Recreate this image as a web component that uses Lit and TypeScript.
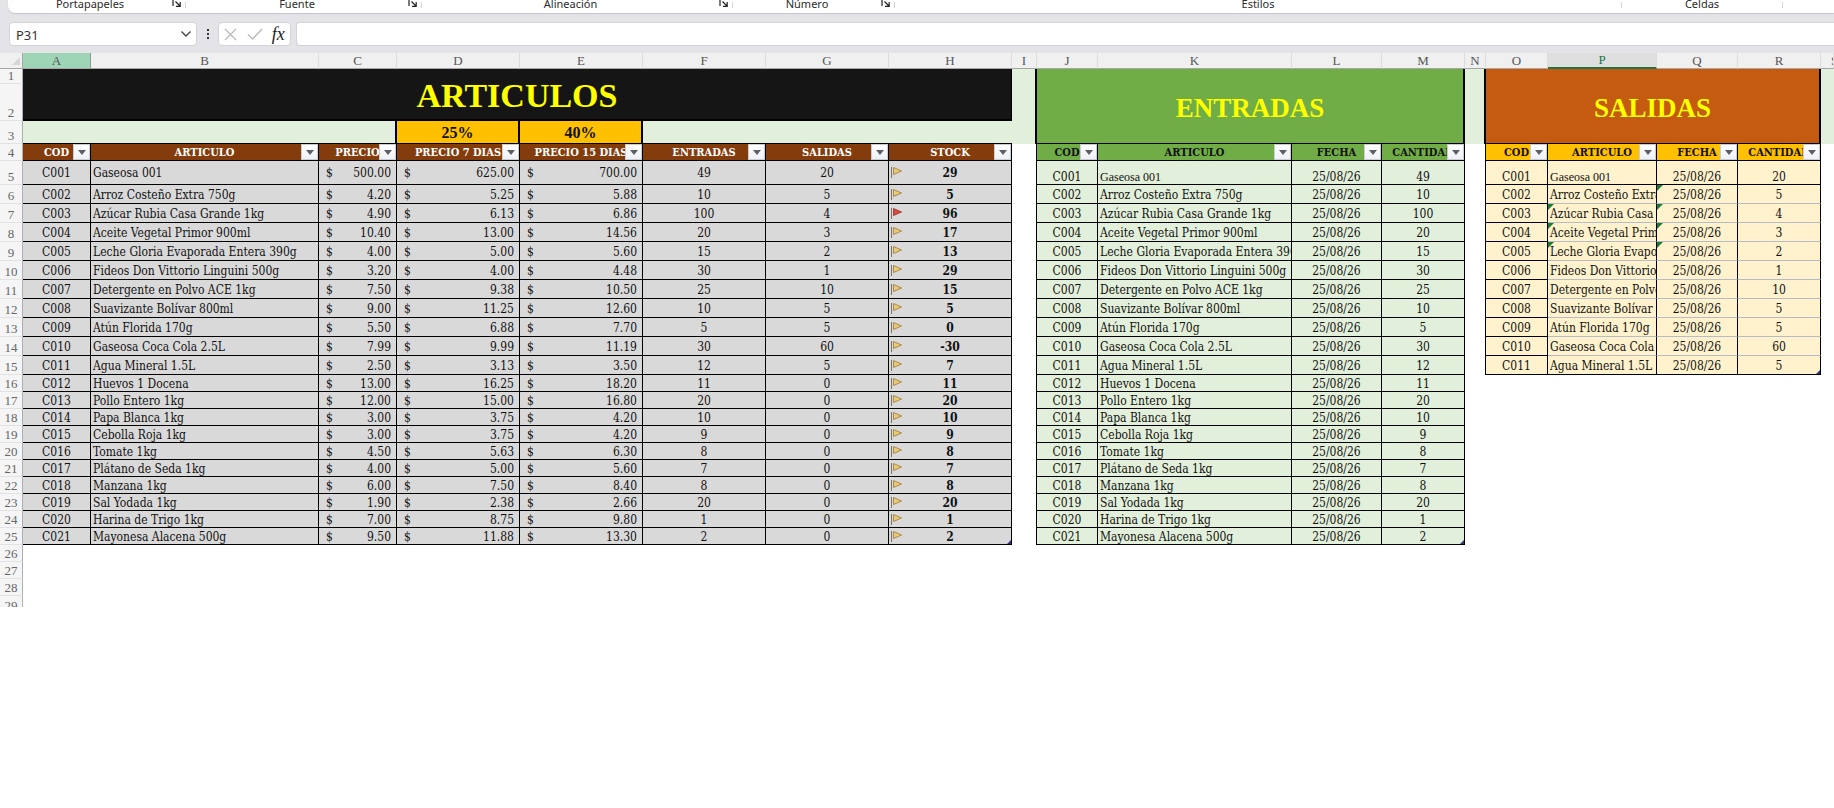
import { LitElement, html, css, svg, nothing, TemplateResult } from "lit";
import { customElement, property } from "lit/decorators.js";
import { classMap } from "lit/directives/class-map.js";

type Product = [code: string, name: string, price: string, price7: string, price15: string, entries: number, exits: number, stock: number];

const PRODUCTS: Product[] = [
  ["C001", "Gaseosa 001", "500.00", "625.00", "700.00", 49, 20, 29],
  ["C002", "Arroz Costeño Extra 750g", "4.20", "5.25", "5.88", 10, 5, 5],
  ["C003", "Azúcar Rubia Casa Grande 1kg", "4.90", "6.13", "6.86", 100, 4, 96],
  ["C004", "Aceite Vegetal Primor 900ml", "10.40", "13.00", "14.56", 20, 3, 17],
  ["C005", "Leche Gloria Evaporada Entera 390g", "4.00", "5.00", "5.60", 15, 2, 13],
  ["C006", "Fideos Don Vittorio Linguini 500g", "3.20", "4.00", "4.48", 30, 1, 29],
  ["C007", "Detergente en Polvo ACE 1kg", "7.50", "9.38", "10.50", 25, 10, 15],
  ["C008", "Suavizante Bolívar 800ml", "9.00", "11.25", "12.60", 10, 5, 5],
  ["C009", "Atún Florida 170g", "5.50", "6.88", "7.70", 5, 5, 0],
  ["C010", "Gaseosa Coca Cola 2.5L", "7.99", "9.99", "11.19", 30, 60, -30],
  ["C011", "Agua Mineral 1.5L", "2.50", "3.13", "3.50", 12, 5, 7],
  ["C012", "Huevos 1 Docena", "13.00", "16.25", "18.20", 11, 0, 11],
  ["C013", "Pollo Entero 1kg", "12.00", "15.00", "16.80", 20, 0, 20],
  ["C014", "Papa Blanca 1kg", "3.00", "3.75", "4.20", 10, 0, 10],
  ["C015", "Cebolla Roja 1kg", "3.00", "3.75", "4.20", 9, 0, 9],
  ["C016", "Tomate 1kg", "4.50", "5.63", "6.30", 8, 0, 8],
  ["C017", "Plátano de Seda 1kg", "4.00", "5.00", "5.60", 7, 0, 7],
  ["C018", "Manzana 1kg", "6.00", "7.50", "8.40", 8, 0, 8],
  ["C019", "Sal Yodada 1kg", "1.90", "2.38", "2.66", 20, 0, 20],
  ["C020", "Harina de Trigo 1kg", "7.00", "8.75", "9.80", 1, 0, 1],
  ["C021", "Mayonesa Alacena 500g", "9.50", "11.88", "13.30", 2, 0, 2],
];

const DATE = "25/08/26";
const EXIT_ROWS = 11;
const COLUMNS: [letter: string, width: number | null][] = [
  ["A", 68], ["B", 228], ["C", 78], ["D", 123], ["E", 123], ["F", 123], ["G", 123], ["H", 123], ["I", 25],
  ["J", 61], ["K", 194], ["L", 90], ["M", 83], ["N", 21], ["O", 62], ["P", 109], ["Q", 81], ["R", 83], ["S", null],
];

@customElement("ribbon-strip")
export class RibbonStrip extends LitElement {
  static styles = css`
    :host { display: block; padding-left: 8px; }
    .strip {
      display: flex; height: 13px; overflow: hidden; background: #fff;
      border-bottom-left-radius: 7px; box-shadow: 0 1px 1px #c3c4c8;
      font: 11px/14px "Noto Sans", "Open Sans", sans-serif; color: #2b2b2b;
    }
    .group {
      display: flex; align-items: flex-end; box-sizing: border-box; flex: none;
      padding-bottom: 2px; text-align: center;
    }
    .group::after { content: ""; width: 1px; height: 6px; margin-bottom: 3px; background: #d4d4d4; }
    .label { flex: 1; }
    .launch {
      flex: none; width: 13px; height: 13px; padding: 0; border: 0; background: none; line-height: 0;
    }
    .launch svg { display: block; }
  `;
  private groups: [string, number, boolean][] = [
    ["Portapapeles", 178, true], ["Fuente", 236, true], ["Alineación", 311, true],
    ["Número", 162, true], ["Estilos", 727, false], ["Celdas", 161, false],
  ];
  render() {
    return html`<div class="strip">
      ${this.groups.map(([name, width, launcher]) => html`
        <div class="group" style="width:${width}px">
          <span class="label">${name}</span>
          ${launcher ? html`<button class="launch" aria-label="Configuración de ${name}">
            <svg width="10" height="13" viewBox="0 0 10 13" fill="none" stroke="#222" stroke-width="1.2">
              <path d="M1 8V1.5H7M3.5 3.5L8 8M8.2 4V8.3H4" /></svg></button>` : nothing}
        </div>`)}
    </div>`;
  }
}

@customElement("formula-bar")
export class FormulaBar extends LitElement {
  static styles = css`
    :host { display: flex; align-items: center; padding: 9px 0 7px 9px; font-family: "Noto Sans", sans-serif; }
    .box {
      display: flex; align-items: center; box-sizing: border-box; height: 24px;
      background: #fff; border: 1px solid #d3d3d7; border-radius: 4px;
    }
    .name { width: 188px; }
    input {
      flex: 1; min-width: 0; border: 0; outline: 0; background: none; padding: 2px 6px 0;
      font: 13px/20px "Noto Sans", sans-serif; color: #333;
    }
    button { display: flex; align-items: center; justify-content: center; border: 0; background: none; padding: 0; height: 22px; }
    .arrow { width: 20px; }
    .dots { width: 21px; display: flex; flex-direction: column; align-items: center; gap: 2px; }
    .dot { width: 2px; height: 2px; background: #333; }
    .tools { width: 73px; }
    .tools button { width: 24px; }
    .tools .fx { font: italic 18px/20px "Liberation Serif", serif; color: #222; }
    .formula { flex: 1; margin-left: 5px; border-right: 0; border-radius: 4px 0 0 4px; }
  `;
  render() {
    return html`
      <div class="box name">
        <input aria-label="Cuadro de nombres" value="P31" />
        <button class="arrow" aria-label="Abrir lista de nombres">
          <svg width="12" height="8" viewBox="0 0 12 8" fill="none" stroke="#444" stroke-width="1.4"><path d="M1.5 1.5L6 6L10.5 1.5" /></svg>
        </button>
      </div>
      <div class="dots"><span class="dot"></span><span class="dot"></span><span class="dot"></span></div>
      <div class="box tools">
        <button aria-label="Cancelar"><svg width="13" height="13" viewBox="0 0 13 13" fill="none" stroke="#b9b9b9" stroke-width="1.2"><path d="M1 1L12 12M12 1L1 12" /></svg></button>
        <button aria-label="Introducir"><svg width="16" height="12" viewBox="0 0 16 12" fill="none" stroke="#b9b9b9" stroke-width="1.4"><path d="M1 6.5L5.5 11L15 1" /></svg></button>
        <button class="fx" aria-label="Insertar función">fx</button>
      </div>
      <div class="box formula"><input aria-label="Barra de fórmulas" /></div>`;
  }
}

@customElement("stock-sheet")
export class StockSheet extends LitElement {
  @property({ type: String }) selected = "P";

  static styles = css`
    :host { display: block; }
    table {
      width: 100%; table-layout: fixed; border-collapse: separate; border-spacing: 0;
      font: 12px/14px "DejaVu Serif Condensed", "DejaVu Serif", serif; color: #111;
    }
    col.rows { width: 23px; }
    th, td {
      box-sizing: border-box; padding: 0; overflow: hidden; white-space: nowrap;
      text-align: center; vertical-align: middle; font-weight: normal;
    }
    tr { height: 17px; }
    .letters { height: 16px; }
    .r1 { height: 15px; }
    .r2 { height: 37px; }
    .r3 { height: 23px; }
    .r5 { height: 24px; }
    .tall { height: 19px; }
    .last { height: 11px; }

    .letters th { background: #f0f0f0; border-bottom: 1px solid #a6a6a6; border-right: 1px solid #dcdcdc; color: #555; font: 13px/14px "Liberation Serif", serif; }
    .letters .corner { border-right-color: #a6a6a6; }
    .corner svg { display: block; margin-left: 12px; }
    .letters .marked { background: #9fd5b7; border-right-color: #8a9a92; }
    .letters .active { background: #dfdfdf; color: #217346; border-bottom: 2px solid #217346; }
    .letters .cut { text-align: left; padding-left: 10px; }
    .num {
      background: #f5f5f5; border-right: 1px solid #a9b1b8; border-bottom: 1px solid #e2e2e2; color: #666;
      font: 13px/14px "Liberation Serif", serif; vertical-align: bottom;
    }
    .clip { height: 11px; line-height: 19px; overflow: hidden; }
    .last .num { border-bottom: 0; }

    .title { padding-top: 3px; font: bold 27px/32px "Liberation Serif", serif; color: #ff0; }
    .t-art { background: #151515; border-bottom: 2px solid #000; border-right: 1px solid #000; font-size: 34px; line-height: 36px; }
    .t-in { background: #70ad47; border-bottom: 1px solid #000; border-right: 2px solid #000; }
    .t-out { background: #c55a11; border-bottom: 1px solid #000; border-right: 2px solid #000; }
    .pale { background: #e2efda; }
    .edge2 { border-right: 2px solid #000; }
    .edge1 { border-right: 1px solid #000; }
    .under { border-bottom: 1px solid #000; }
    .rate { background: #ffc000; padding-top: 2px; font: bold 16px/20px "Liberation Serif", serif; }

    .head { position: relative; padding-top: 1px; border-right: 1px solid #000; border-bottom: 1px solid #000; font-weight: bold; font-size: 11px; }
    .art.head { background: #843c0c; color: #fff; }
    .in.head { background: #70ad47; }
    .out.head { background: #ffc000; }
    .filter {
      position: absolute; top: 0; right: 0; width: 17px; height: 16px; padding: 0;
      display: flex; align-items: center; justify-content: center;
      border: 1px solid #c9cdd3; background: linear-gradient(#fff, #eef1f5);
    }

    .cell { position: relative; padding-top: 1px; border-right: 1px solid #000; border-bottom: 1px solid #000; }
    .art.cell { background: #d9d9d9; }
    .in.cell { background: #e2efda; }
    .out.cell { background: #fff2cc; }
    .cell.soft { border-bottom-color: #b5bcc6; }
    .left { text-align: left; padding-left: 2px; }
    .low { vertical-align: bottom; }
    .small { font: 12px/14px "Liberation Serif", serif; }
    .money { display: flex; justify-content: space-between; padding: 0 5px 0 7px; }
    .stock { display: grid; grid-template-columns: 1fr auto 1fr; align-items: center; font-weight: bold; }
    .stock svg { display: block; margin-left: 2px; }
    .warn::before {
      content: ""; position: absolute; top: 0; left: 0; border: 3px solid transparent;
      border-top-color: #1f7a33; border-left-color: #1f7a33;
    }
    .end::after {
      content: ""; position: absolute; right: 0; bottom: 0; border: 2px solid transparent;
      border-right-color: #36367c; border-bottom-color: #36367c;
    }
  `;

  private head(kind: string, label: string) {
    return html`<th scope="col" class="head ${kind}">${label}<button class="filter" aria-label="Filtrar ${label}">
      <svg width="8" height="5" viewBox="0 0 8 5"><path d="M0 0H8L4 5Z" fill="#5c5f66" /></svg></button></th>`;
  }

  private cell(kind: string, content: unknown, flags: Record<string, boolean> = {}): TemplateResult {
    return html`<td class=${classMap({ cell: true, [kind]: true, ...flags })}>${content}</td>`;
  }

  private money(value: string) {
    return html`<div class="money"><span>$</span><span>${value}</span></div>`;
  }

  private flag(stock: number) {
    const red = stock > 64;
    return html`<svg width="12" height="14" viewBox="0 0 12 14">${svg`
      <path d="M0.5 1V12" stroke="#7d7468" stroke-width="1" />
      <path d="M2.5 1.5L10.5 5L2.5 8.5Z" fill=${red ? "#d9483b" : "#ecc873"} stroke=${red ? "#a8423a" : "#a98a4c"} stroke-width="1" />`}</svg>`;
  }

  private productRow(p: Product, i: number) {
    const [code, name, price, p7, p15, entries, exits, stock] = p;
    const first = i === 0;
    const end = i === PRODUCTS.length - 1;
    const outEnd = i === EXIT_ROWS - 1;
    const soft = i > 0 && !outEnd;
    return html`<tr class=${first ? "r5" : i < EXIT_ROWS ? "tall" : ""}>
      <th scope="row" class="num">${i + 5}</th>
      ${this.cell("art", code)}
      ${this.cell("art", name, { left: true })}
      ${this.cell("art", this.money(price))}
      ${this.cell("art", this.money(p7))}
      ${this.cell("art", this.money(p15))}
      ${this.cell("art", entries)}
      ${this.cell("art", exits)}
      ${this.cell("art", html`<div class="stock">${this.flag(stock)}<span>${stock}</span></div>`, { end })}
      <td class="edge1"></td>
      ${this.cell("in", code, { low: first })}
      ${this.cell("in", name, { left: true, low: first, small: first })}
      ${this.cell("in", DATE, { low: first })}
      ${this.cell("in", entries, { low: first, end })}
      ${i < EXIT_ROWS ? html`
        <td class="edge1"></td>
        ${this.cell("out", code, { low: first })}
        ${this.cell("out", name, { left: true, low: first, small: first, soft, warn: i > 1 && i < 5 })}
        ${this.cell("out", DATE, { low: first, soft, warn: i > 0 && i < 5 })}
        ${this.cell("out", exits, { low: first, soft, end: outEnd })}
        <td></td>` : html`<td colspan="6"></td>`}
    </tr>`;
  }

  render() {
    return html`<table>
      <colgroup>
        <col class="rows" />
        ${COLUMNS.map(([, w]) => (w ? html`<col style="width:${w}px" />` : html`<col />`))}
      </colgroup>
      <thead>
        <tr class="letters">
          <th class="corner" aria-label="Seleccionar todo"><svg width="8" height="8" viewBox="0 0 8 8"><path d="M8 0V8H0Z" fill="#d6d6d6" /></svg></th>
          ${COLUMNS.map(([l]) => html`<th scope="col" class=${classMap({ marked: l === "A", active: l === this.selected, cut: l === "S" })}>${l}</th>`)}
        </tr>
      </thead>
      <tbody>
        <tr class="r1">
          <th scope="row" class="num">1</th>
          <th class="title t-art" colspan="8" rowspan="2">ARTICULOS</th>
          <td class="pale edge2" rowspan="3"></td>
          <th class="title t-in" colspan="4" rowspan="3">ENTRADAS</th>
          <td class="pale edge2" rowspan="3"></td>
          <th class="title t-out" colspan="4" rowspan="3">SALIDAS</th>
          <td class="pale" rowspan="3"></td>
        </tr>
        <tr class="r2"><th scope="row" class="num">2</th></tr>
        <tr class="r3">
          <th scope="row" class="num">3</th>
          <td class="pale under edge2" colspan="3"></td>
          <td class="rate under edge2">25%</td>
          <td class="rate under edge2">40%</td>
          <td class="pale under" colspan="3"></td>
        </tr>
        <tr>
          <th scope="row" class="num">4</th>
          ${["COD", "ARTICULO", "PRECIO", "PRECIO 7 DIAS", "PRECIO 15 DIAS", "ENTRADAS", "SALIDAS", "STOCK"].map((t) => this.head("art", t))}
          <td class="edge1"></td>
          ${["COD", "ARTICULO", "FECHA", "CANTIDAD"].map((t) => this.head("in", t))}
          <td class="edge1"></td>
          ${["COD", "ARTICULO", "FECHA", "CANTIDAD"].map((t) => this.head("out", t))}
          <td></td>
        </tr>
        ${PRODUCTS.map((p, i) => this.productRow(p, i))}
        ${[26, 27, 28].map((n) => html`<tr><th scope="row" class="num">${n}</th><td colspan="19"></td></tr>`)}
        <tr class="last"><th scope="row" class="num"><div class="clip">29</div></th><td colspan="19"></td></tr>
      </tbody>
    </table>`;
  }
}

@customElement("app-root")
export class AppRoot extends LitElement {
  static styles = css`
    :host { display: block; min-height: 100vh; background: #fff; overflow: hidden; }
    .chrome { display: block; background: #e4e4e8; }
  `;
  render() {
    return html`
      <header class="chrome"><ribbon-strip></ribbon-strip><formula-bar></formula-bar></header>
      <main><stock-sheet></stock-sheet></main>`;
  }
}
